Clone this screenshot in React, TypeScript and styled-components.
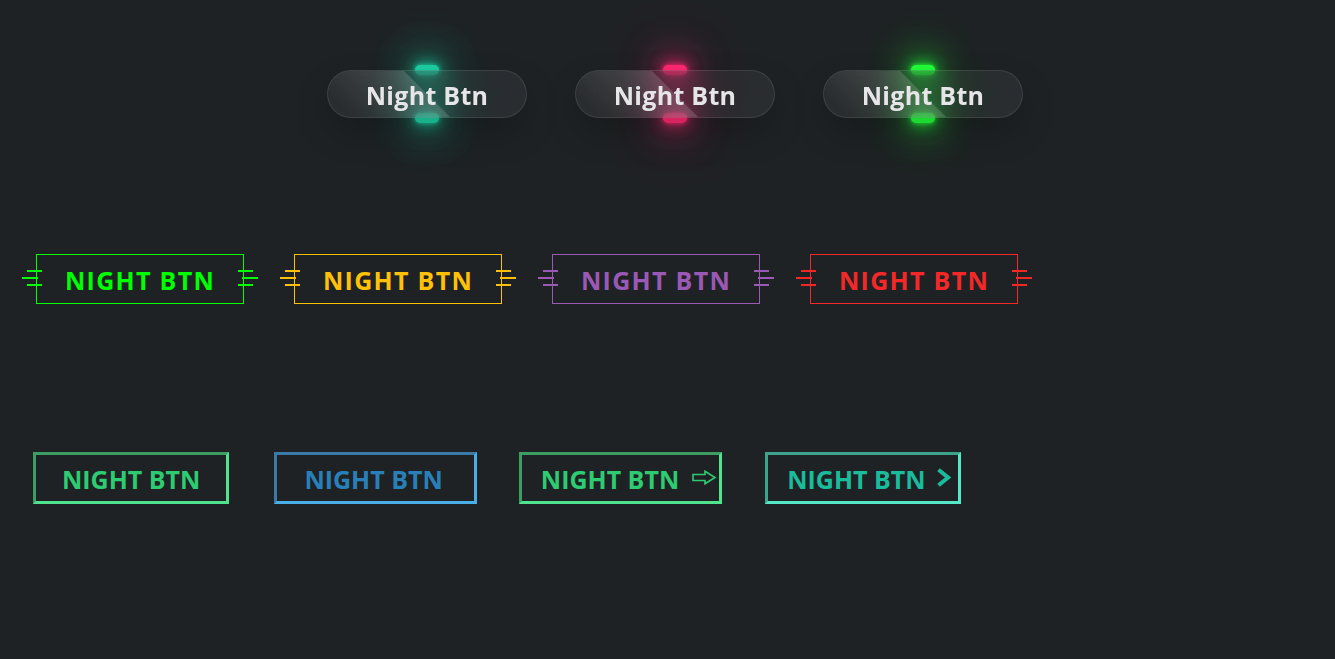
import React from "react";
import styled, { createGlobalStyle } from "styled-components";

const Global = createGlobalStyle`
  html, body { margin: 0; padding: 0; background: #1f2225; }
  body { font-family: "Open Sans", "Noto Sans", sans-serif; }
`;

const Page = styled.div`
  width: 1335px;
  height: 659px;
  background: #1f2225;
  display: flex;
  flex-direction: column;
  overflow: hidden;
`;

const GlassRow = styled.div`
  display: flex;
  justify-content: center;
  gap: 48px;
  padding-left: 15px;
  margin-top: 70px;
`;

const GlassWrap = styled.div<{ $c: string }>`
  position: relative;
  width: 200px;
  height: 48px;
  &::before,
  &::after {
    content: "";
    position: absolute;
    left: 50%;
    transform: translateX(-50%);
    width: 24px;
    height: 10px;
    border-radius: 10px;
    background: ${(p) => p.$c};
    box-shadow: 0 0 5px ${(p) => p.$c}, 0 0 15px ${(p) => p.$c},
      0 0 30px ${(p) => p.$c}, 0 0 45px ${(p) => p.$c}, 0 0 60px ${(p) => p.$c};
  }
  &::before { top: -5px; }
  &::after { bottom: -5px; }
`;

const GlassBtn = styled.button`
  position: relative;
  z-index: 1;
  box-sizing: border-box;
  width: 100%;
  height: 100%;
  display: flex;
  align-items: center;
  justify-content: center;
  padding: 0;
  background: rgba(255, 255, 255, 0.05);
  box-shadow: 0 15px 35px rgba(0, 0, 0, 0.2);
  border: 1px solid rgba(255, 255, 255, 0.1);
  border-radius: 30px;
  color: #e6e6e8;
  font: 700 25px "Open Sans", sans-serif;
  letter-spacing: 0.3px;
  overflow: hidden;
  backdrop-filter: blur(15px);
  cursor: pointer;
  &::before {
    content: "";
    position: absolute;
    top: 0;
    left: 0;
    width: 50%;
    height: 100%;
    background: linear-gradient(to left, rgba(255, 255, 255, 0.15), transparent);
    transform: skewX(45deg);
  }
  span { position: relative; top: 1px; }
`;

const NeonRow = styled.div`
  display: flex;
  gap: 50px;
  padding-left: 36px;
  margin-top: 136px;
`;

const NeonBtn = styled.button<{ $c: string }>`
  position: relative;
  box-sizing: border-box;
  width: 208px;
  height: 50px;
  padding: 0;
  background: transparent;
  border: 1px solid ${(p) => p.$c};
  color: ${(p) => p.$c};
  font: 700 25px "Open Sans", sans-serif;
  letter-spacing: 1.3px;
  text-transform: uppercase;
  cursor: pointer;
  span { position: relative; top: 1px; }
`;

const Deco = styled.i<{ $c: string; $side: "left" | "right" }>`
  position: absolute;
  top: calc(50% - 2px);
  ${(p) => (p.$side === "left" ? "left: -15px;" : "right: -15px;")}
  width: 16px;
  height: 2px;
  background: ${(p) => p.$c};
  &::before,
  &::after {
    content: "";
    position: absolute;
    ${(p) => (p.$side === "left" ? "left: 5px;" : "left: -4px;")}
    width: 15px;
    height: 2px;
    background: ${(p) => p.$c};
  }
  &::before { top: -7px; }
  &::after { top: 7px; }
`;

const GradRow = styled.div`
  display: flex;
  padding-left: 33px;
  margin-top: 148px;
`;

const GradBtn = styled.button<{
  $text: string;
  $dark: string;
  $light: string;
  $pl: number;
  $pr: number;
  $gap?: number;
  $ml?: number;
}>`
  box-sizing: border-box;
  height: 52px;
  display: flex;
  align-items: center;
  gap: ${(p) => p.$gap ?? 12}px;
  margin-left: ${(p) => p.$ml ?? 0}px;
  padding: 1px ${(p) => p.$pr}px 0 ${(p) => p.$pl}px;
  background: transparent;
  border: 3px solid;
  border-color: ${(p) => p.$dark} ${(p) => p.$light} ${(p) => p.$light} ${(p) => p.$dark};
  color: ${(p) => p.$text};
  font: 700 25px "Open Sans", sans-serif;
  text-transform: uppercase;
  white-space: nowrap;
  cursor: pointer;
`;

const IconBox = styled.span`
  display: inline-flex;
  align-items: center;
  margin-top: -2px;
`;

const glass = ["#1ecfa3", "#ff2a72", "#22ff3a"];
const neon = ["#00ff00", "#ffc107", "#9b59b6", "#f52828"];

export default function App() {
  return (
    <Page>
      <Global />
      <GlassRow>
        {glass.map((c) => (
          <GlassWrap key={c} $c={c}>
            <GlassBtn>
              <span>Night Btn</span>
            </GlassBtn>
          </GlassWrap>
        ))}
      </GlassRow>
      <NeonRow>
        {neon.map((c) => (
          <NeonBtn key={c} $c={c}>
            <Deco $c={c} $side="left" />
            <span>Night Btn</span>
            <Deco $c={c} $side="right" />
          </NeonBtn>
        ))}
      </NeonRow>
      <GradRow>
        <GradBtn $text="#2ecc71" $dark="#3c9e63" $light="#4ee38c" $pl={26} $pr={26}>
          Night Btn
        </GradBtn>
        <GradBtn $text="#2980b9" $dark="#3a7aa6" $light="#4aaee6" $pl={27} $pr={31} $ml={45}>
          Night Btn
        </GradBtn>
        <GradBtn $text="#2ecc71" $dark="#3c9e63" $light="#4ee38c" $pl={19} $pr={2} $gap={13} $ml={42}>
          Night Btn
          <IconBox>
            <svg width="25" height="15" viewBox="0 0 25 15" fill="none">
              <path
                d="M1 4.5 H13 V1.2 L23 7.5 L13 13.8 V10.5 H1 Z"
                stroke="#2ecc71"
                strokeWidth="1.6"
                strokeLinejoin="miter"
              />
            </svg>
          </IconBox>
        </GradBtn>
        <GradBtn $text="#1abc9c" $dark="#3da38b" $light="#55e8c6" $pl={19} $pr={7} $gap={10} $ml={43}>
          Night Btn
          <IconBox>
            <svg width="15" height="19" viewBox="0 0 15 19" fill="none">
              <path d="M2.5 1.8 L12 9.5 L2.5 17.2" stroke="#1abc9c" strokeWidth="4" strokeLinejoin="miter" />
            </svg>
          </IconBox>
        </GradBtn>
      </GradRow>
    </Page>
  );
}
